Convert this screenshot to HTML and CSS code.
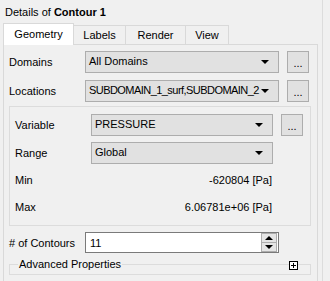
FILE: index.html
```html
<!DOCTYPE html>
<html lang="en">
<head>
  <meta charset="UTF-8" />
  <title>Details of Contour 1</title>
  <link rel="stylesheet" href="styles.css">
</head>
<body>
  <div class="frame">
    <div class="title">Details of <b>Contour 1</b></div>

    <div class="tabs">
      <div class="tab active">Geometry</div>
      <div class="tab tab-labels">Labels</div>
      <div class="tab tab-render">Render</div>
      <div class="tab tab-view">View</div>
    </div>

    <div class="pane">
      <div class="row">
        <label>Domains</label>
        <div class="select">All Domains</div>
        <button class="dots">...</button>
      </div>
      <div class="row">
        <label>Locations</label>
        <div class="select long">SUBDOMAIN_1_surf,SUBDOMAIN_2</div>
        <button class="dots">...</button>
      </div>

      <div class="group">
        <div class="row">
          <label>Variable</label>
          <div class="select">PRESSURE</div>
          <button class="dots">...</button>
        </div>
        <div class="row">
          <label>Range</label>
          <div class="select">Global</div>
        </div>
        <div class="row info">
          <label>Min</label>
          <span class="value">-620804 [Pa]</span>
        </div>
        <div class="row info">
          <label>Max</label>
          <span class="value">6.06781e+06 [Pa]</span>
        </div>
      </div>

      <div class="row contours">
        <label># of Contours</label>
        <div class="spin">
          <span>11</span>
          <div class="spin-btns">
            <div class="spin-btn up"></div>
            <div class="spin-btn down"></div>
          </div>
        </div>
      </div>

      <div class="advanced">
        <span class="legend">Advanced Properties</span>
        <span class="expand"></span>
      </div>
    </div>
  </div>
</body>
</html>
```

FILE: styles.css
```css
body {
  margin: 0;
  background: #f0f0f0;
  font-family: "Liberation Sans", Arial, sans-serif;
  font-size: 11px;
  color: #000;
  overflow: hidden;
}

.frame {
  width: 322px;
  height: 281px;
  border-right: 1px solid #dcdcdc;
}

.title {
  height: 23px;
  line-height: 24px;
  padding-left: 5px;
}

.tabs {
  display: flex;
  align-items: flex-end;
  height: 21px;
  margin-left: 3px;
}

.tab {
  height: 19px;
  line-height: 19px;
  text-align: center;
  border: 1px solid #d9d9d9;
  border-bottom: none;
  border-left: none;
  box-sizing: border-box;
}

.tab.active {
  width: 71px;
  height: 22px;
  line-height: 21px;
  background: #fff;
  border-left: 1px solid #d9d9d9;
  position: relative;
  z-index: 1;
  margin-bottom: -1px;
}

.tab-labels { width: 52px; }
.tab-render { width: 60px; }
.tab-view { width: 43px; }

.pane {
  margin-left: 3px;
  width: 315px;
  height: 240px;
  box-sizing: border-box;
  border: 1px solid #d9d9d9;
  padding: 6px 0 0 5px;
}

.row {
  display: flex;
  align-items: center;
  height: 22px;
  margin-bottom: 7px;
}

.row label {
  width: 76px;
  flex: none;
  white-space: nowrap;
}

.select {
  width: 194px;
  height: 22px;
  box-sizing: border-box;
  background: #e1e1e1;
  border: 1px solid #adadad;
  padding-left: 3px;
  line-height: 19px;
  position: relative;
  white-space: nowrap;
  overflow: hidden;
}

.select.long {
  letter-spacing: -0.55px;
}

.select::after {
  content: "";
  position: absolute;
  right: 9px;
  top: 8px;
  border-left: 4px solid transparent;
  border-right: 4px solid transparent;
  border-top: 4px solid #000;
}

.dots {
  width: 22px;
  height: 22px;
  margin-left: 8px;
  padding: 2px 0 0;
  background: #e1e1e1;
  border: 1px solid #adadad;
  font-family: inherit;
  font-size: 11px;
  line-height: 12px;
}

.group {
  width: 302px;
  height: 120px;
  box-sizing: border-box;
  border: 1px solid #dcdcdc;
  margin-top: -3px;
  padding: 7px 0 0 5px;
}

.group .row {
  margin-bottom: 6px;
}

.group .select {
  width: 182px;
}

.row.info {
  height: 20px;
  margin-bottom: 7px;
}

.info .value {
  width: 181px;
  text-align: right;
}

.group .row:nth-child(3) {
  margin-top: 3px;
}

.contours {
  margin-top: 6px;
  height: 21px;
  margin-bottom: 0;
}

.spin {
  width: 194px;
  height: 21px;
  box-sizing: border-box;
  background: #fff;
  border: 1px solid #7a7a7a;
  display: flex;
  align-items: center;
  justify-content: space-between;
  padding-left: 4px;
}

.spin-btns {
  display: flex;
  flex-direction: column;
  margin-right: 1px;
}

.spin-btn {
  width: 14px;
  height: 8px;
  background: #e5e5e5;
  border: 1px solid #adadad;
  position: relative;
}

.spin-btn.down {
  border-top: none;
}

.spin-btn::after {
  content: "";
  position: absolute;
  left: 3px;
  top: 2px;
  border-left: 4px solid transparent;
  border-right: 4px solid transparent;
}

.spin-btn.up::after {
  border-bottom: 4px solid #000;
}

.spin-btn.down::after {
  border-top: 4px solid #000;
}

.advanced {
  width: 302px;
  height: 11px;
  box-sizing: border-box;
  border: 1px solid #dcdcdc;
  margin-top: 11px;
  position: relative;
}

.legend {
  position: absolute;
  left: 8px;
  top: -10px;
  background: #f0f0f0;
  padding: 0 1px;
  line-height: 18px;
}

.expand {
  position: absolute;
  right: 12px;
  top: -4px;
  width: 9px;
  height: 9px;
  box-sizing: border-box;
  border: 1px solid #000;
  background: #fff;
}

.expand::before,
.expand::after {
  content: "";
  position: absolute;
  background: #000;
}

.expand::before {
  left: 1px;
  top: 3px;
  width: 5px;
  height: 1px;
}

.expand::after {
  left: 3px;
  top: 1px;
  width: 1px;
  height: 5px;
}
```
